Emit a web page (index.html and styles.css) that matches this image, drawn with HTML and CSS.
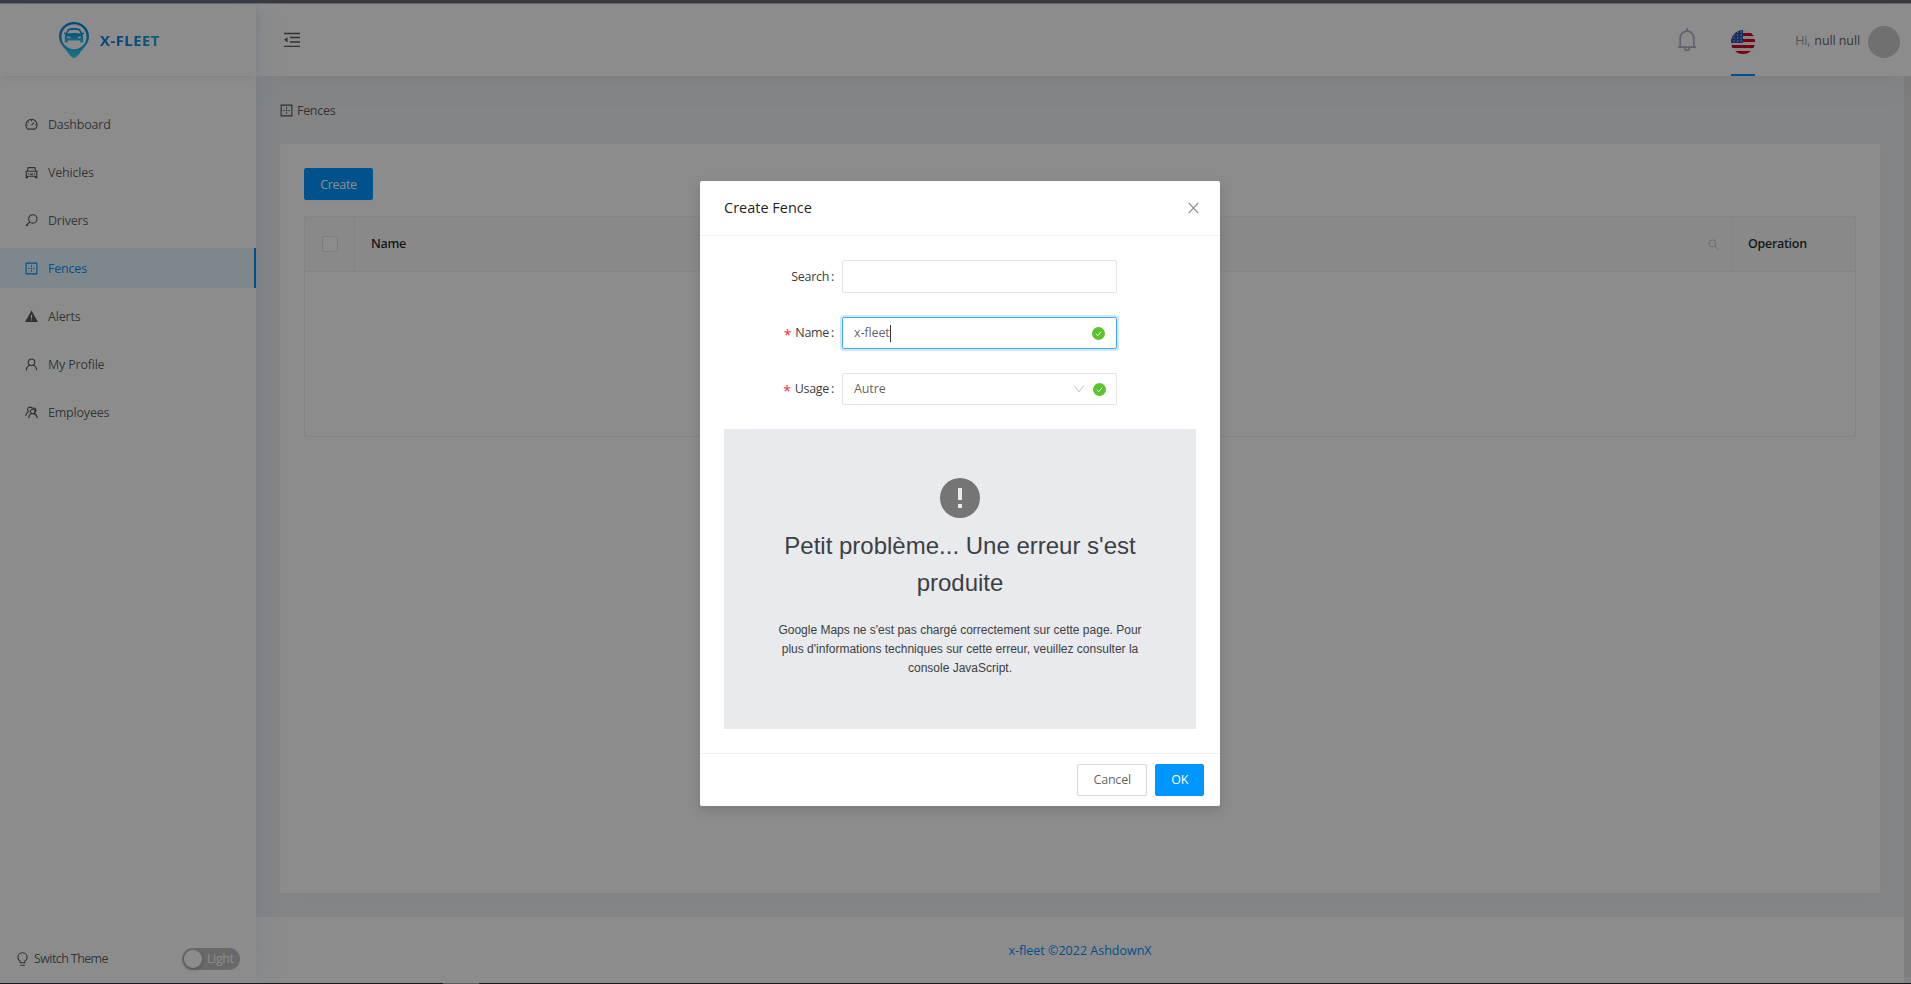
FILE: index.html
```html
<!DOCTYPE html>
<html lang="en">
<head>
<meta charset="utf-8">
<title>X-Fleet</title>
<link rel="stylesheet" href="styles.css">
</head>
<body>
<div class="window">
  <div class="strip-top"></div>
  <div class="app">
    <aside class="sider">
      <div class="brand">
        <svg class="logo" viewBox="0 0 30 36">
          <defs><linearGradient id="pin" x1="0" y1="0" x2="0" y2="1"><stop offset="0" stop-color="#0086e6"/><stop offset=".5" stop-color="#0f9fe0"/><stop offset="1" stop-color="#3cd4ea"/></linearGradient></defs>
          <path fill="url(#pin)" fill-rule="evenodd" d="M15 0C6.700 0 0 6.300 0 14.500C0 22 6 26 9.500 31.500C12 35 13.500 36 15 36S18 35 20.500 31.500C24 26 30 22 30 14.500C30 6.300 23.300 0 15 0ZM15 2.200A12.500 12.500 0 1 1 15 27.200A12.500 12.500 0 0 1 15 2.200Z"/>
          <path fill="url(#pin)" fill-rule="evenodd" d="M9 7Q15 5 21 7L23 11L25 10.500V12L23.500 12.500Q24.500 14 24.200 20.500H21V18.500H9V20.500H5.800Q5.500 14 6.500 12.500L5 12V10.500L7 11ZM10 8.300L8.500 11.500Q15 10.300 21.500 11.500L20 8.300Q15 7 10 8.300ZM8 14.200L8.500 16L11.500 16.300L11 15ZM22 14.200L19 15L18.500 16.300L21.500 16Z"/>
        </svg>
        <span class="brand-name">X-FLEET</span>
      </div>
      <nav class="menu">
        <a class="item"><svg class="ic" viewBox="0 0 14 14"><path d="M3.200 12A6 6 0 1 1 10.800 12ZM7 7.800L9.700 4.900M7 2.200V3.400M2.300 7.500H3.400M10.600 7.500H11.700M3.700 4.200L4.500 5"/></svg><span>Dashboard</span></a>
        <a class="item"><svg class="ic" viewBox="0 0 14 14"><path d="M2.500 5.500L3.300 1.700H10.700L11.500 5.500M.5 5.700H13.500M1.300 5.700V12.500H2.700V11H11.300V12.500H12.700V5.700M1.300 11H12.700M3 8.200H4.200M9.800 8.200H11M5.300 8.700H8.700"/></svg><span>Vehicles</span></a>
        <a class="item"><svg class="ic" viewBox="0 0 14 14"><circle cx="8.400" cy="5.300" r="4.500"/><path d="M5.200 8.500L.8 12.800M2.300 11.300L3.500 12.500"/></svg><span>Drivers</span></a>
        <a class="item active"><svg class="ic" viewBox="0 0 14 14"><path d="M1.200 1.200H12.800V12.800H1.200ZM7 3.500V5M7 6.200V7.800M7 9V10.500M3.500 7H5M6.200 7H7.800M9 7H10.500"/></svg><span>Fences</span></a>
        <a class="item"><svg class="ic" viewBox="0 0 14 14"><path class="solid" fill-rule="evenodd" d="M7 .6L14 13H0ZM6.400 5V9H7.600V5ZM6.400 10V11.300H7.600V10Z"/></svg><span>Alerts</span></a>
        <a class="item"><svg class="ic" viewBox="0 0 14 14"><circle cx="7" cy="4.600" r="3.500"/><path d="M1.300 13.300Q1.800 8.800 5.200 7.800M12.700 13.300Q12.200 8.800 8.800 7.800"/></svg><span>My Profile</span></a>
        <a class="item"><svg class="ic" viewBox="0 0 14 14"><circle cx="8.300" cy="6" r="2.500"/><path d="M3.900 13Q4.300 9.300 6.800 8.200M13.200 13Q12.700 9.300 9.800 8.200M7.600 2.300A2.700 2.700 0 1 0 4.200 6.300M4 6.200Q1.200 7.200 .8 10.600M7.600 2.300Q11.800 1.700 11.800 5Q11.800 6 11 6.800"/></svg><span>Employees</span></a>
      </nav>
      <div class="theme">
        <span class="theme-label"><svg class="bulb" viewBox="0 0 12 16"><path d="M3.500 11.500V10Q1 8.500 1 5.700A5 5 0 0 1 11 5.700Q11 8.500 8.500 10V11.500ZM3.500 14.300H8.500"/></svg>Switch Theme</span>
        <span class="switch"><i class="knob"></i><span>Light</span></span>
      </div>
    </aside>
    <main class="main">
      <header class="header">
        <svg class="fold" viewBox="0 0 16 16"><path d="M0 1.500H16M6 5.500H16M6 10H16M0 14.300H16"/><path class="tri" d="M0 7.800L3.500 5.200V10.400Z"/></svg>
        <div class="header-right">
          <svg class="bell" viewBox="0 0 18 24"><path d="M2.200 19.200V10A6.800 6.800 0 0 1 15.800 10V19.200M0 19.200H18M9 0V3M6.500 19.800A2.500 2.500 0 0 0 11.500 19.800"/></svg>
          <span class="lang">
            <svg class="flag" viewBox="0 0 24 24"><defs><clipPath id="round"><circle cx="12" cy="12" r="12"/></clipPath></defs>
              <g clip-path="url(#round)"><path fill="#f4f4f4" d="M0 0H24V24H0Z"/><path fill="#d80027" d="M12 3H24V6H12ZM12 9H24V12H12ZM0 15H24V18H0ZM0 21H24V24H0Z"/><path fill="#2e52b2" d="M0 0H12V13H0Z"/><path stroke="#f4f4f4" stroke-width="1.200" stroke-dasharray="1.200 2.400" d="M6 2H12M2.500 5H12M2.500 8H12M2.500 11H12"/></g></svg>
          </span>
          <span class="user"><span class="hi">Hi,</span><span class="who">null null</span><i class="avatar"></i></span>
        </div>
      </header>
      <div class="scroll">
        <div class="page">
          <div class="content">
            <div class="crumb"><svg class="ic" viewBox="0 0 14 14"><path d="M1.200 1.200H12.800V12.800H1.200ZM7 3.500V5M7 6.200V7.800M7 9V10.500M3.500 7H5M6.200 7H7.800M9 7H10.500"/></svg><span>Fences</span></div>
            <section class="card">
              <button class="btn primary create">Create</button>
              <div class="table">
                <div class="thead">
                  <div class="th th-check"><i class="checkbox"></i></div>
                  <div class="th th-name">Name<svg class="find" viewBox="0 0 12 12"><circle cx="4.800" cy="4.800" r="3.800"/><path d="M7.600 7.600L11.300 11.300"/></svg></div>
                  <div class="th th-op">Operation</div>
                </div>
              </div>
            </section>
          </div>
          <footer class="footer">x-fleet ©2022 AshdownX</footer>
        </div>
        <div class="bar"><div class="thumb"></div></div>
      </div>
    </main>
    <div class="mask">
      <div class="modal">
        <div class="modal-head"><span>Create Fence</span><svg class="close" viewBox="0 0 11 12"><path d="M.8 .8L10.200 11.200M10.200 .8L.8 11.200"/></svg></div>
        <div class="modal-body">
          <div class="row"><label class="label">Search<span class="colon">:</span></label><div class="input"></div></div>
          <div class="row"><label class="label"><b class="star">*</b>Name<span class="colon">:</span></label><div class="input focus"><span class="typed">x-fleet</span><i class="caret"></i><svg class="ok" viewBox="0 0 14 14"><circle cx="7" cy="7" r="7"/><path d="M4.200 7.300L6.300 9.400L9.800 4.900"/></svg></div></div>
          <div class="row"><label class="label"><b class="star">*</b>Usage<span class="colon">:</span></label><div class="input select"><span class="typed">Autre</span><svg class="chev" viewBox="0 0 10 8"><path d="M.5 .8L5 6.900L9.500 .8"/></svg><svg class="ok" viewBox="0 0 14 14"><circle cx="7" cy="7" r="7"/><path d="M4.200 7.300L6.300 9.400L9.800 4.900"/></svg></div></div>
          <div class="map">
            <svg class="warn" viewBox="0 0 40 40"><circle cx="20" cy="20" r="20"/><path d="M18 10H22V22H18ZM18 26H22V30H18Z"/></svg>
            <div class="map-title">Petit problème... Une erreur s'est produite</div>
            <div class="map-text">Google Maps ne s'est pas chargé correctement sur cette page. Pour plus d'informations techniques sur cette erreur, veuillez consulter la console JavaScript.</div>
          </div>
        </div>
        <div class="modal-foot"><button class="btn cancel">Cancel</button><button class="btn primary">OK</button></div>
      </div>
    </div>
  </div>
  <div class="strip-bottom"><div class="strip-mark"></div></div>
</div>
</body>
</html>
```
FILE: styles.css
```css
* { box-sizing: border-box; }
body { margin: 0; font: 12.5px/20px "Open Sans", "Noto Sans", sans-serif; letter-spacing: -0.3px; color: rgba(0,0,0,.65); }
svg { display: block; flex: none; overflow: visible; fill: none; stroke: currentColor; }
.window { height: 984px; width: 1911px; overflow: hidden; display: flex; flex-direction: column; }
.strip-top { height: 4px; background: #3a3b41; border-bottom: 1px solid #68696b; flex: none; }
.strip-bottom { height: 1px; background: #1b171b; flex: none; padding-left: 443px; }
.strip-mark { width: 36px; height: 1px; background: #5c5a5c; }
.app { position: relative; flex: 1; min-height: 0; display: flex; }

.sider { width: 256px; flex: none; background: #fff; display: flex; flex-direction: column; box-shadow: 0 0 28px rgba(24,144,255,.12); z-index: 1; }
.brand { height: 72px; display: flex; align-items: center; padding-left: 59px; gap: 11px; box-shadow: 0 1px 9px -3px rgba(0,0,0,.2); }
.logo { width: 30px; height: 36px; stroke: none; }
.brand-name { font-size: 15px; font-weight: 700; letter-spacing: .4px; background: linear-gradient(100deg, #007fe8, #0888e0 50%, #22b4d8); -webkit-background-clip: text; background-clip: text; color: transparent; }
.menu { flex: 1; padding-top: 28px; display: flex; flex-direction: column; gap: 8px; }
.item { height: 40px; display: flex; align-items: center; padding-left: 25px; gap: 10px; letter-spacing: -0.2px; }
.item span, .crumb span { padding-top: 1px; }
.ic { width: 13px; height: 13px; stroke-width: 1.2; }
.solid { fill: currentColor; stroke: none; }
.active { color: #0092ff; background: #e6f7ff; border-right: 2px solid #0092ff; }
.theme { height: 48px; display: flex; align-items: center; justify-content: space-between; padding: 0 16px 0 17px; }
.theme-label { display: flex; align-items: center; gap: 6px; letter-spacing: -0.6px; }
.bulb { width: 11px; height: 15px; stroke-width: 1.2; }
.switch { width: 58px; height: 22px; border-radius: 11px; background: #bfbfbf; color: #fff; display: flex; align-items: center; padding-left: 2px; gap: 5px; letter-spacing: -0.4px; }
.knob { width: 18px; height: 18px; border-radius: 50%; background: #fff; box-shadow: 0 2px 4px rgba(0,35,11,.2); }

.main { flex: 1; min-width: 0; display: flex; flex-direction: column; }
.header { height: 72px; flex: none; background: #fff; display: flex; align-items: center; justify-content: space-between; padding: 0 11px 0 28px; box-shadow: 4px 4px 40px rgba(0,0,0,.05); position: relative; }
.fold { width: 16px; height: 16px; stroke-width: 1.3; }
.tri { fill: currentColor; stroke: none; }
.header-right { display: flex; align-items: center; height: 72px; }
.bell { width: 18px; height: 24px; color: #b4b0c8; stroke-width: 1.7; }
.lang { height: 72px; margin: 0 40px 0 35px; display: flex; align-items: center; border-bottom: 2px solid #0092ff; padding-top: 6px; }
.flag { width: 24px; height: 24px; stroke: none; }
.user { display: flex; align-items: center; padding-top: 1px; }
.hi { color: #999; margin-right: 4px; letter-spacing: -0.2px; }
.who { margin-right: 8px; letter-spacing: -0.1px; }
.avatar { width: 32px; height: 32px; border-radius: 50%; background: #ccc; margin-top: 3px; }
.scroll { flex: 1; min-height: 0; display: flex; }
.page { flex: 1; display: flex; flex-direction: column; }
.bar { width: 7px; background: #f0f2f5; }
.thumb { height: 901px; background: #e4e4e4; }
.content { height: 841px; background: #f0f2f5; padding: 24px; }
.crumb { height: 20px; display: flex; align-items: center; gap: 4px; margin-bottom: 24px; }
.card { height: 749px; background: #fff; padding: 24px; box-shadow: 4px 4px 20px rgba(0,0,0,.01); }
.btn { font: inherit; letter-spacing: inherit; height: 32px; padding: 0 15px; border: 1px solid #d9d9d9; border-radius: 2px; background: #fff; color: rgba(0,0,0,.65); box-shadow: 0 2px 0 rgba(0,0,0,.015); }
.primary { background: #0096ff; border-color: #0096ff; color: #fff; }
.create { display: block; width: 69px; padding: 1px 0 0; }
.cancel { width: 70px; padding: 0; letter-spacing: -0.2px; }
.table { margin-top: 16px; height: 221px; border: 1px solid #f0f0f0; border-radius: 2px; }
.thead { height: 55px; background: #fafafa; display: flex; border-bottom: 1px solid #f0f0f0; color: rgba(0,0,0,.85); font-weight: 600; letter-spacing: -0.3px; }
.th { display: flex; align-items: center; padding: 0 16px; border-right: 1px solid #f0f0f0; }
.th-check { width: 50px; padding-left: 17px; }
.checkbox { width: 16px; height: 16px; border: 1px solid #e2e2e2; border-radius: 2px; background: #fff; }
.th-name { flex: 1; justify-content: space-between; padding-right: 12px; }
.th-op { width: 123px; border-right: 0; }
.find { width: 11px; height: 11px; color: #bfbfbf; }
.footer { flex: 1; background: #fff; color: #0092ff; text-align: center; padding-top: 24px; letter-spacing: 0; }

.mask { position: absolute; inset: 0; z-index: 5; background: rgba(0,0,0,.45); padding: 177px 0 0 700px; }
.modal { width: 520px; height: 625px; background: #fff; border-radius: 2px; box-shadow: 0 4px 12px rgba(0,0,0,.15); display: flex; flex-direction: column; }
.modal-head { height: 55px; border-bottom: 1px solid #f0f0f0; display: flex; align-items: center; justify-content: space-between; padding: 0 21px 0 24px; font-size: 14.500px; letter-spacing: 0; color: rgba(0,0,0,.9); }
.close { width: 11px; height: 12px; color: #8c8c8c; stroke-width: 1.2; }
.modal-body { flex: 1; padding: 24px 24px 0; }
.row { display: flex; height: 32px; margin-bottom: 24px; align-items: center; }
.row:first-child { height: 33px; }
.label { width: 118px; padding-right: 8px; display: flex; justify-content: flex-end; color: rgba(0,0,0,.8); }
.colon { margin-left: 2px; }
.star { color: #ff2a30; font: 14px "Open Sans", sans-serif; margin: 2px 4px 0 0; }
.input { width: 275px; height: 100%; border: 1px solid #e2e2e2; border-radius: 2px; display: flex; align-items: center; padding: 0 11px; }
.typed { letter-spacing: -0.1px; }
.focus { border-color: #40a9ff; box-shadow: 0 0 0 2px rgba(24,144,255,.2); }
.caret { width: 1px; height: 17px; background: #333; }
.ok { width: 13px; height: 13px; stroke: #fff; margin-left: auto; }
.ok circle { fill: #5cc32c; stroke: none; }
.select { padding-right: 10px; }
.chev { width: 10px; height: 8px; color: #bfbfbf; margin-left: auto; }
.chev + .ok { margin-left: 9px; }
.map { height: 300px; background: #e8eaed; text-align: center; font-family: "Liberation Sans", sans-serif; letter-spacing: 0; color: #3c4043; display: flex; flex-direction: column; align-items: center; padding: 49px 48px 0; }
.warn { width: 40px; height: 40px; stroke: none; fill: #757575; }
.warn path { fill: #e8eaed; }
.map-title { font-size: 24px; line-height: 37px; margin-top: 9px; }
.map-text { font-size: 12px; line-height: 19px; margin-top: 20px; }
.modal-foot { height: 53px; border-top: 1px solid #f0f0f0; display: flex; justify-content: flex-end; align-items: center; padding: 0 16px; gap: 8px; }
```
